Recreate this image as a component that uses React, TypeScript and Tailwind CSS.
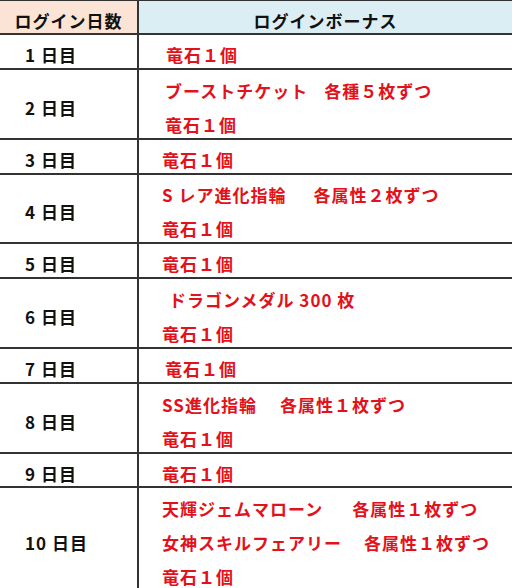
type Line = { text: string; rest?: string; gap?: string; indent?: string };

type Row = {
  day: string;
  height: string;
  lines: Line[];
};

const rows: Row[] = [
  { day: '1 日目', height: 'h-[35px]', lines: [{ text: '竜石１個', indent: 'pl-[4px]' }] },
  {
    day: '2 日目',
    height: 'h-[70px]',
    lines: [
      { text: 'ブーストチケット', gap: 'w-[16px]', rest: '各種５枚ずつ', indent: 'pl-[3px]' },
      { text: '竜石１個', indent: 'pl-[3px]' },
    ],
  },
  { day: '3 日目', height: 'h-[35px]', lines: [{ text: '竜石１個' }] },
  {
    day: '4 日目',
    height: 'h-[69px]',
    lines: [
      { text: 'S レア進化指輪', gap: 'w-[27px]', rest: '各属性２枚ずつ' },
      { text: '竜石１個' },
    ],
  },
  { day: '5 日目', height: 'h-[35px]', lines: [{ text: '竜石１個' }] },
  {
    day: '6 日目',
    height: 'h-[70px]',
    lines: [{ text: 'ドラゴンメダル 300 枚', indent: 'pl-[7px]' }, { text: '竜石１個' }],
  },
  { day: '7 日目', height: 'h-[35px]', lines: [{ text: '竜石１個', indent: 'pl-[3px]' }] },
  {
    day: '8 日目',
    height: 'h-[70px]',
    lines: [
      { text: 'SS進化指輪', gap: 'w-[23px]', rest: '各属性１枚ずつ' },
      { text: '竜石１個' },
    ],
  },
  { day: '9 日目', height: 'h-[34px]', lines: [{ text: '竜石１個' }] },
  {
    day: '10 日目',
    height: 'h-[105px]',
    lines: [
      { text: '天輝ジェムマローン', gap: 'w-[29px]', rest: '各属性１枚ずつ' },
      { text: '女神スキルフェアリー', gap: 'w-[22px]', rest: '各属性１枚ずつ' },
      { text: '竜石１個' },
    ],
  },
];

const App = () => {
  return (
    <div className="w-[512px] h-[588px] overflow-hidden bg-white font-['Noto_Sans_CJK_JP',sans-serif] font-bold text-[17px] tracking-[1px]">
      {/* Header */}
      <div className="flex h-[35px] border-t border-b-2 border-[#333]">
        <div className="w-[139px] shrink-0 border-r-2 border-[#333] bg-[#fbe4d5] flex items-center justify-center pt-[7px] text-[#111]">
          ログイン日数
        </div>
        <div className="flex-1 bg-[#daeef3] flex items-center justify-center pt-[7px] text-[#111]">
          ログインボーナス
        </div>
      </div>

      {/* Rows */}
      {rows.map(row => (
        <div key={row.day} className={`flex ${row.height} border-b-2 border-[#333]`}>
          <div className="w-[139px] shrink-0 border-r-2 border-[#333] flex items-center pl-[25px] pt-[7px] text-[#111]">
            {row.day}
          </div>
          <div className="flex-1 flex flex-col justify-center pl-[23px] pt-[7px] text-[#e3111a]">
            {row.lines.map(line => (
              <div key={line.text} className={`flex leading-[34px] whitespace-pre ${line.indent ?? ''}`}>
                <span>{line.text}</span>
                {line.rest && (
                  <>
                    <span className={`inline-block ${line.gap}`} />
                    <span>{line.rest}</span>
                  </>
                )}
              </div>
            ))}
          </div>
        </div>
      ))}
    </div>
  );
};

export default App;
